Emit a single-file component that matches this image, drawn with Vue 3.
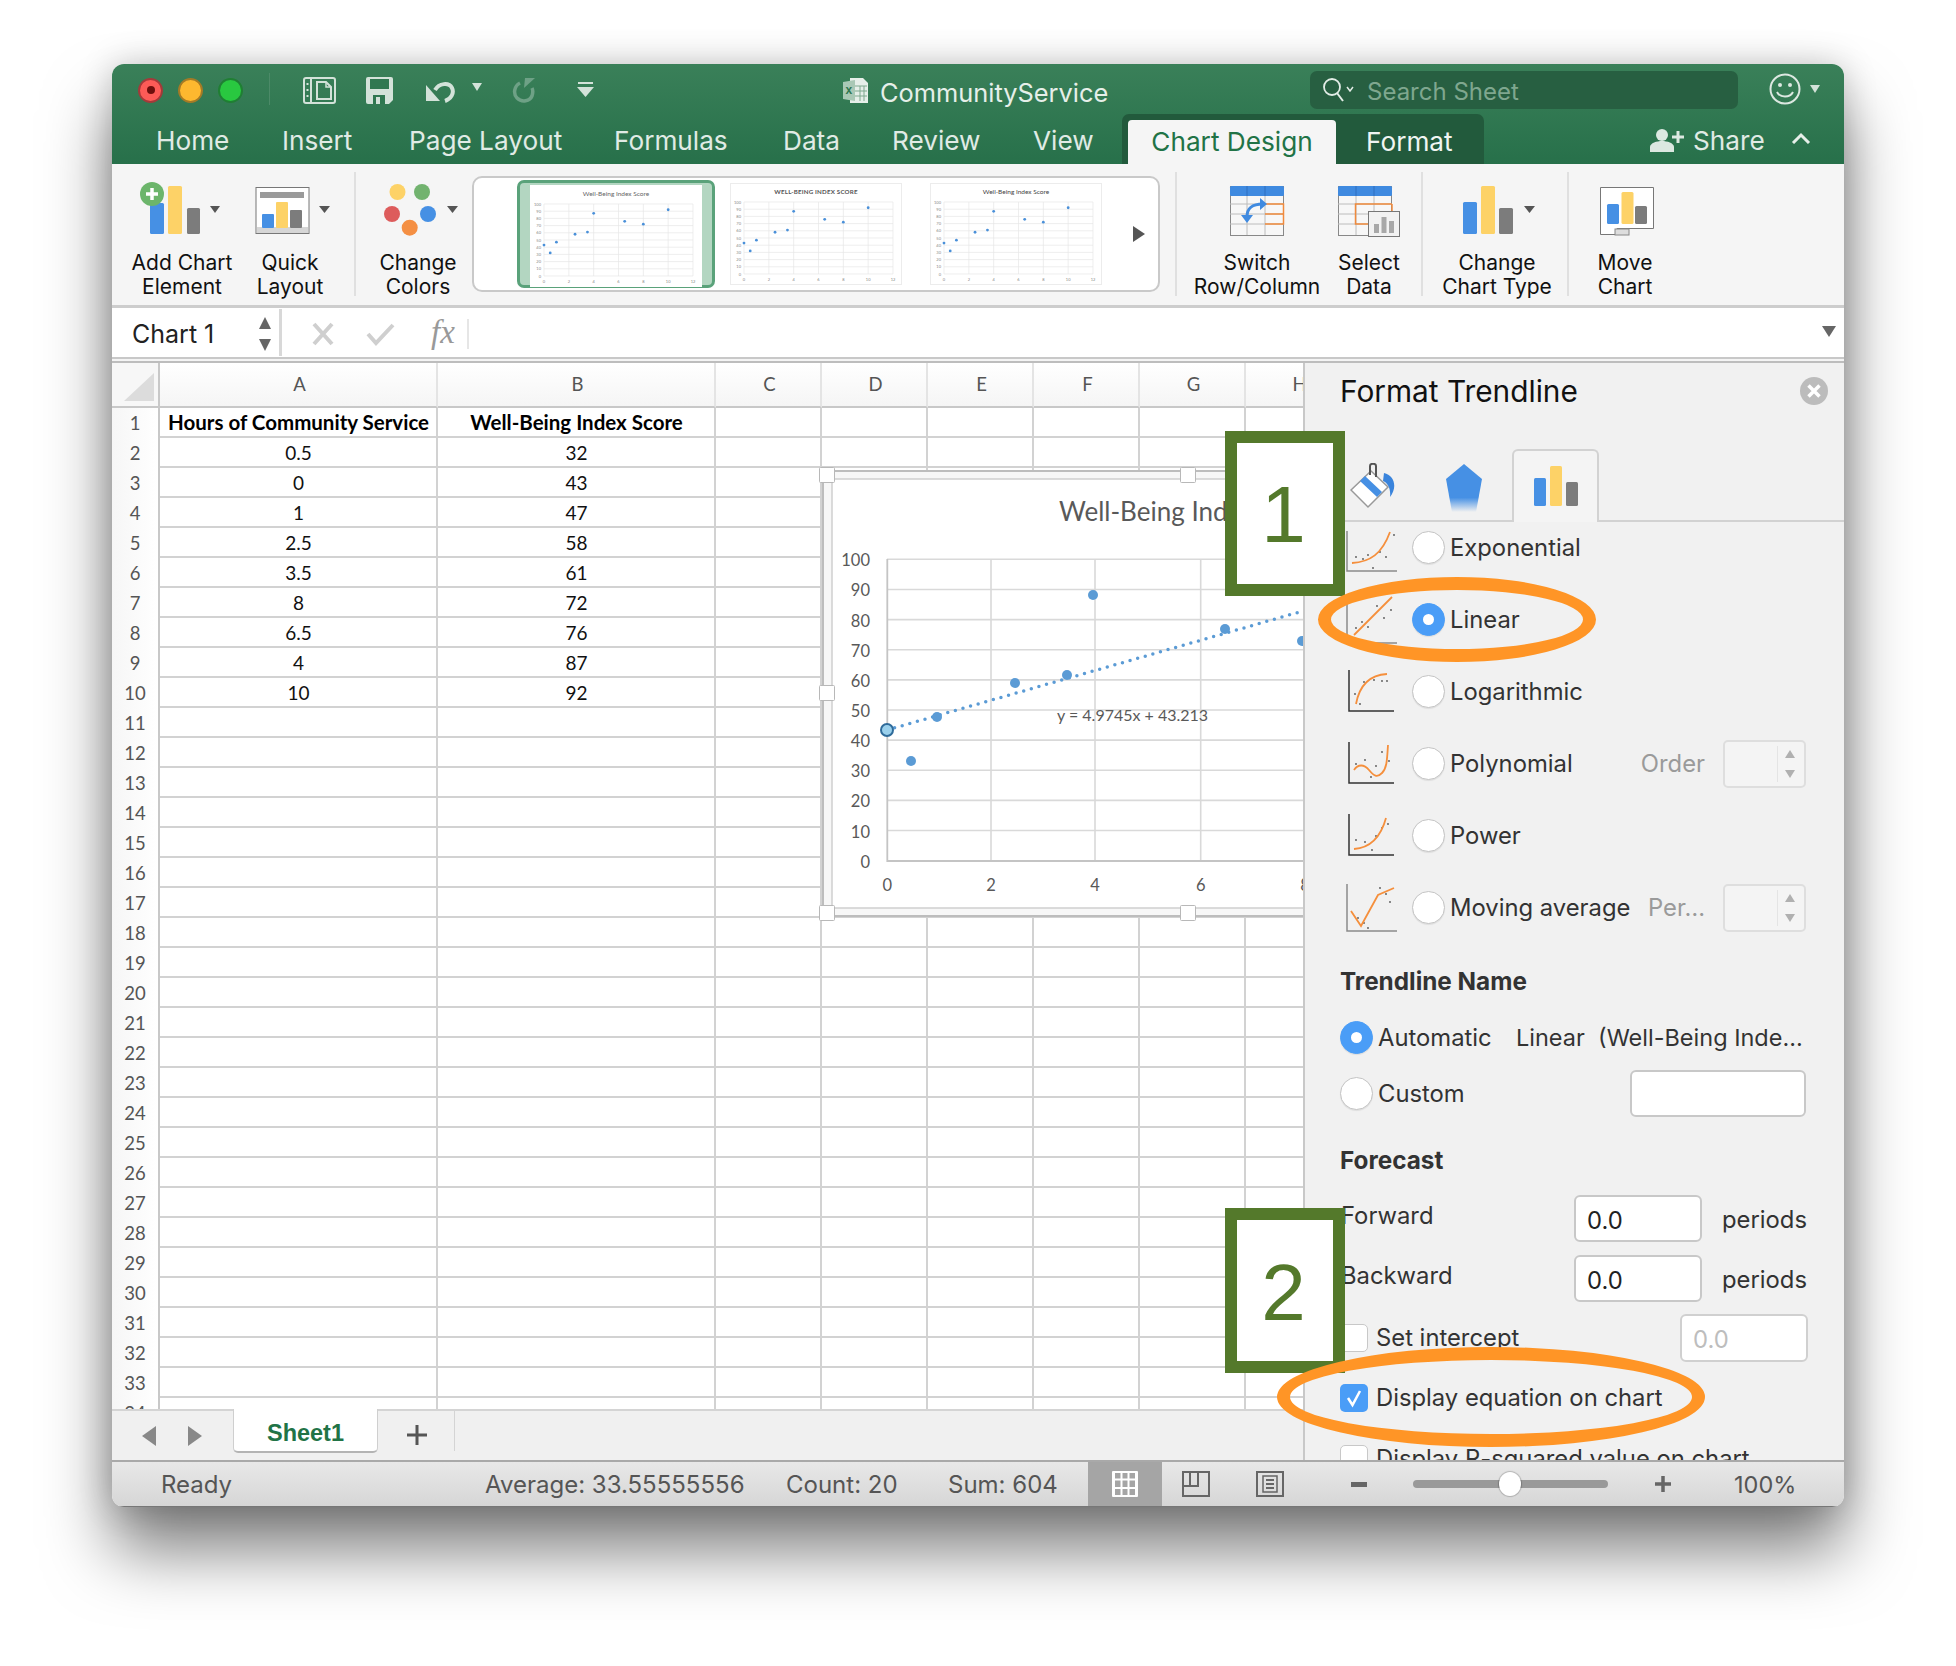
<script setup>
const tabs = [
  { t: 'Home', w: 126 }, { t: 'Insert', w: 127 }, { t: 'Page Layout', w: 205 }, { t: 'Formulas', w: 169 },
  { t: 'Data', w: 109 }, { t: 'Review', w: 141 }, { t: 'View', w: 89 }
]
const cols = [
  { l: 'A', w: 278 }, { l: 'B', w: 278 }, { l: 'C', w: 106 }, { l: 'D', w: 106 },
  { l: 'E', w: 106 }, { l: 'F', w: 106 }, { l: 'G', w: 106 }, { l: 'H', w: 106 }
]
const cells = [
  ['Hours of Community Service', 'Well-Being Index Score'], ['0.5', '32'], ['0', '43'], ['1', '47'], ['2.5', '58'],
  ['3.5', '61'], ['8', '72'], ['6.5', '76'], ['4', '87'], ['10', '92']
]
const rows = Array.from({ length: 34 }, (_, i) => ({ n: i + 1, v: cells[i] || ['', ''] }))
const pts = [[0.5, 32], [0, 43], [1, 47], [2.5, 58], [3.5, 61], [8, 72], [6.5, 76], [4, 87], [10, 92]]
const thumbs = [
  { title: 'Well-Being Index Score', cls: 'th-title', sel: true },
  { title: 'WELL-BEING INDEX SCORE', cls: 'th-title caps', sel: false },
  { title: 'Well-Being Index Score', cls: 'th-title dark', sel: false }
]
const tx = (x) => 14 + (x * 149) / 12
const ty = (y) => 91 - y * 0.72
const yTicks = [0, 10, 20, 30, 40, 50, 60, 70, 80, 90, 100]
const xTicks = [0, 2, 4, 6, 8, 10, 12]

const chartYs = yTicks.map((v) => ({ v, y: 860.7 - v * 3.014 }))
const chartXs = [0, 2, 4, 6].map((v, i) => ({ v, x: [887.3, 991, 1095, 1200.7][i] }))
const chartDots = [[911, 761], [937, 717], [1015, 683], [1067, 675], [1093, 595], [1225, 629], [1302, 641]]
const handles = [[827, 475], [1188, 475], [827, 693], [827, 913], [1188, 913]]

const trend = [
  { name: 'Exponential', light: true, axis: 'M1 7V47H51', curve: 'M6 39C24 38 36 30 44 8', dots: [[10, 33], [17, 35], [22, 31], [27, 44], [34, 28], [40, 33], [48, 11]] },
  { name: 'Linear', on: true, light: true, axis: 'M1 1V47H51', curve: 'M8 39L46 1', dots: [[10, 32], [16, 26], [22, 31], [31, 10], [38, 22], [45, 14]] },
  { name: 'Logarithmic', axis: 'M3 2V43H48', curve: 'M10 36C13 20 22 7 41 6', dots: [[9, 26], [14, 36], [18, 14], [28, 12], [36, 13], [41, 13]] },
  { name: 'Polynomial', axis: 'M3 2V43H48', curve: 'M8 30C12 24 18 24 23 30S31 38 36 33 41 20 42 5', extra: 'Order', dots: [[10, 24], [19, 20], [25, 37], [30, 26], [36, 12], [43, 21]] },
  { name: 'Power', axis: 'M3 2V43H48', curve: 'M8 37C22 36 34 28 40 6', dots: [[10, 28], [19, 30], [26, 38], [30, 24], [36, 16], [42, 12]] },
  { name: 'Moving average', light: true, axis: 'M1 0V47H51', curve: 'M5 27L15 42 32 11 48 4', poly: true, extra: 'Per…', dots: [[12, 34], [18, 39], [22, 44], [34, 4], [40, 10], [44, 18]] }
]
</script>

<template>
  <div class="page">
    <div class="window">
      <header class="titlebar">
        <div class="toprow">
          <span class="light red"><i></i></span>
          <span class="light amber"></span>
          <span class="light green"></span>
          <span class="qdiv"></span>
          <svg class="q-doc" width="33" height="27" viewBox="0 0 33 27">
            <rect x="1" y="1" width="31" height="25" rx="2" fill="none" stroke="#d3e2d9" stroke-width="2" />
            <path d="M8 1V26" stroke="#d3e2d9" stroke-width="2" />
            <path d="M4.500 6V8M4.500 12V14M4.500 18V20" stroke="#d3e2d9" stroke-width="2" />
            <path d="M14 22V5H23L28 10V22Z" fill="none" stroke="#d3e2d9" stroke-width="2" />
            <path d="M23 5V10H28" fill="none" stroke="#d3e2d9" stroke-width="1.500" />
          </svg>
          <svg class="q-save" width="27" height="27" viewBox="0 0 27 27">
            <path d="M2 0H25A2 2 0 0 1 27 2V23L23 27H2A2 2 0 0 1 0 25V2A2 2 0 0 1 2 0Z" fill="#d3e2d9" />
            <rect x="4" y="2" width="19" height="10" fill="#2f7750" />
            <rect x="7" y="18" width="12" height="9" fill="#2f7750" />
            <rect x="10" y="20" width="4" height="7" fill="#d3e2d9" />
          </svg>
          <svg class="q-undo" width="31" height="23" viewBox="0 0 31 23">
            <path d="M1 5V21H15Z" fill="#d3e2d9" />
            <path d="M10 10C14 3 24 2 27 8C29.500 13 26 19 20 21" fill="none" stroke="#d3e2d9" stroke-width="4" />
          </svg>
          <span class="caret qc1"></span>
          <svg class="q-redo" width="24" height="25" viewBox="0 0 24 25">
            <path d="M8 5C2 8 1 16 5 20C10 25 18 23 20 18C21 15 21 12 20 10" fill="none" stroke="#6ea186" stroke-width="3.500" />
            <path d="M13 0L23 0L12 10Z" fill="#6ea186" />
          </svg>
          <svg class="q-custom" width="17" height="15" viewBox="0 0 17 15">
            <rect x="1" y="0" width="15" height="2" fill="#d3e2d9" />
            <path d="M0 5H17L8.500 15Z" fill="#d3e2d9" />
          </svg>
          <svg class="q-file" width="26" height="27" viewBox="0 0 26 27">
            <path d="M7 1H20L25 6V26H7Z" fill="#e6efe9" />
            <path d="M12 9H24M12 14H24M12 19H24M17 9V24M21 9V24" stroke="#7fa98f" stroke-width="1" />
            <path d="M0 5L12 3V24L0 22Z" fill="#a9c8b5" />
            <text x="2.500" y="17" class="q-x">x</text>
          </svg>
          <span class="doc-title">CommunityService</span>
          <div class="search">
            <svg width="32" height="28" viewBox="0 0 32 28">
              <circle cx="10" cy="11" r="8" fill="none" stroke="#e2ece6" stroke-width="1.800" />
              <path d="M15 17L21 25" stroke="#e2ece6" stroke-width="2" />
              <path d="M25 11L28 15L31 11" fill="none" stroke="#e2ece6" stroke-width="1.500" />
            </svg>
            <span class="s-text">Search Sheet</span>
          </div>
          <svg class="smiley" width="32" height="32" viewBox="0 0 32 32">
            <circle cx="16" cy="16" r="14.500" fill="none" stroke="#dce8e1" stroke-width="2" />
            <circle cx="11" cy="12" r="2" fill="#dce8e1" /><circle cx="21" cy="12" r="2" fill="#dce8e1" />
            <path d="M8 19C11 25 21 25 24 19" fill="none" stroke="#dce8e1" stroke-width="2" />
          </svg>
          <span class="caret qc2"></span>
        </div>
        <div class="tabrow">
          <span v-for="t in tabs" :key="t.t" class="tab" :style="{ width: t.w + 'px' }">{{ t.t }}</span>
          <div class="ctx">
            <span class="ctx-on">Chart Design</span>
            <span class="ctx-off">Format</span>
          </div>
          <svg class="share-ico" width="35" height="24" viewBox="0 0 35 24">
            <circle cx="12" cy="7" r="6" fill="#dce8e1" />
            <path d="M0 24V19C0 15 7 13 12 13S24 15 24 19V24Z" fill="#dce8e1" />
            <path d="M28 3V15M22 9H34" stroke="#dce8e1" stroke-width="3" />
          </svg>
          <span class="share">Share</span>
          <svg class="chev" width="20" height="12" viewBox="0 0 20 12"><path d="M2 11L10 3L18 11" fill="none" stroke="#e6efe9" stroke-width="3" /></svg>
        </div>
      </header>

      <section class="ribbon">
        <div class="rb w116">
          <svg width="116" height="56" viewBox="0 0 116 56">
            <rect x="26" y="23" width="14" height="31" rx="1.500" fill="#4690e4" />
            <rect x="44" y="6" width="14" height="48" rx="1.500" fill="#fdd267" />
            <rect x="63" y="28" width="13" height="26" rx="1.500" fill="#7c7c7c" />
            <circle cx="28" cy="14" r="12" fill="#6cb56b" />
            <path d="M28 8V20M22 14H34" stroke="#fff" stroke-width="3.500" />
            <path d="M86 26H96L91 33Z" fill="#555" />
          </svg>
          <span class="lbl">Add Chart<br />Element</span>
        </div>
        <div class="rb w100">
          <svg width="100" height="56" viewBox="0 0 100 56">
            <rect x="16" y="7.500" width="53" height="46" fill="#fff" stroke="#777" />
            <rect x="20" y="12" width="44" height="6" fill="#9a9a9a" />
            <rect x="17" y="47" width="51" height="6" fill="#d6d6d6" />
            <rect x="22" y="34" width="12" height="14" rx="1" fill="#4690e4" />
            <rect x="36" y="22" width="12" height="26" rx="1" fill="#fdd267" />
            <rect x="50" y="30" width="12" height="18" rx="1" fill="#7c7c7c" />
            <path d="M79 26H90L84.500 33Z" fill="#555" />
          </svg>
          <span class="lbl">Quick<br />Layout</span>
        </div>
        <span class="rsep first"></span>
        <div class="rb w108">
          <svg width="108" height="56" viewBox="0 0 108 56">
            <circle cx="33.500" cy="12" r="8" fill="#fdd267" />
            <circle cx="58" cy="12" r="8" fill="#72b36f" />
            <circle cx="28" cy="34" r="8" fill="#dd5c5c" />
            <circle cx="64" cy="34" r="8" fill="#4690e4" />
            <circle cx="45.700" cy="47.700" r="8" fill="#f48f43" />
            <path d="M83 26H94L88.500 33Z" fill="#555" />
          </svg>
          <span class="lbl">Change<br />Colors</span>
        </div>
        <div class="gallery">
          <div v-for="(th, i) in thumbs" :key="i" class="thumb" :class="{ sel: th.sel, third: i === 2 }">
            <svg width="172" height="102" viewBox="0 0 172 102" class="thsvg">
              <text x="86" y="11" text-anchor="middle" :class="th.cls">{{ th.title }}</text>
              <path v-for="v in yTicks" :key="'g' + v" :d="`M14 ${ty(v)}H163`" class="th-grid" />
              <path v-for="v in xTicks" :key="'v' + v" :d="`M${tx(v)} 19V91`" class="th-grid" />
              <text v-for="v in yTicks" :key="'yt' + v" x="11" :y="ty(v) + 1.500" text-anchor="end" class="th-tick">{{ v }}</text>
              <text v-for="v in xTicks" :key="'xt' + v" :x="tx(v)" y="98" text-anchor="middle" class="th-tick">{{ v }}</text>
              <circle v-for="(p, k) in pts" :key="'p' + k" :cx="tx(p[0])" :cy="ty(p[1])" r="1.400" fill="#4a90d9" />
            </svg>
          </div>
          <svg class="gal-arrow" width="12" height="16" viewBox="0 0 12 16"><path d="M0 0L12 8L0 16Z" fill="#555" /></svg>
        </div>
        <span class="rsep gal"></span>
        <div class="rb w120">
          <svg width="120" height="56" viewBox="0 0 120 56">
            <rect x="33.500" y="6.500" width="53" height="49" fill="#f7f7f7" stroke="#888" />
            <path d="M33 24H87M33 34H87M33 44H87M50 6V55M68 6V55" stroke="#bcbcbc" />
            <rect x="33" y="6" width="54" height="10" rx="1.500" fill="#3f8ae0" />
            <path d="M50 16V6M68 16V6" stroke="#2e6fc0" />
            <path d="M68 24H86.500V44H68M68 34H86.500" fill="none" stroke="#f08a3c" stroke-width="1.500" />
            <path d="M66 24C55 24 50 28 50 37" fill="none" stroke="#3f8ae0" stroke-width="3" />
            <path d="M63 18L70 24L63 30ZM44 35H56L50 43Z" fill="#3f8ae0" />
          </svg>
          <span class="lbl">Switch<br />Row/Column</span>
        </div>
        <div class="rb w104">
          <svg width="104" height="56" viewBox="0 0 104 56" class="ovis">
            <rect x="21.500" y="6.500" width="53" height="49" fill="#f7f7f7" stroke="#888" />
            <path d="M21 24H75M21 34H75M21 44H75M39 6V55M57 6V55" stroke="#bcbcbc" />
            <rect x="21" y="6" width="54" height="10" rx="1.500" fill="#3f8ae0" />
            <path d="M39 16V6M57 16V6" stroke="#2e6fc0" />
            <path d="M75 24H38.500V44H60" fill="none" stroke="#f08a3c" stroke-width="1.500" />
            <path d="M75 24V34" fill="none" stroke="#f08a3c" stroke-width="1.500" />
            <rect x="51.500" y="31.500" width="31" height="25" fill="#f2f2f2" stroke="#777" />
            <rect x="57" y="44" width="5" height="9" fill="#a8a8a8" /><rect x="64.500" y="37" width="5" height="16" fill="#a8a8a8" /><rect x="72" y="41" width="5" height="12" fill="#a8a8a8" />
          </svg>
          <span class="lbl">Select<br />Data</span>
        </div>
        <span class="rsep mid"></span>
        <div class="rb w140">
          <svg width="140" height="56" viewBox="0 0 140 56">
            <rect x="36" y="22" width="14" height="32" rx="1.500" fill="#4690e4" />
            <rect x="54" y="6" width="14" height="48" rx="1.500" fill="#fdd267" />
            <rect x="72" y="28" width="14" height="26" rx="1.500" fill="#7c7c7c" />
            <path d="M97 26H108L102.500 33Z" fill="#555" />
          </svg>
          <span class="lbl">Change<br />Chart Type</span>
        </div>
        <span class="rsep"></span>
        <div class="rb w92">
          <svg width="92" height="56" viewBox="0 0 92 56">
            <path d="M21.500 7.500H74.500V48.500H21.500V48.500" fill="#fff" stroke="#777" />
            <path d="M21.500 7.500V54.500H38V48.500" fill="#fff" stroke="#777" />
            <rect x="36" y="49" width="14" height="6" fill="#ddd" stroke="#888" />
            <rect x="28" y="24" width="12" height="20" rx="1.500" fill="#4690e4" />
            <rect x="42.500" y="12" width="12" height="32" rx="1.500" fill="#fdd267" />
            <rect x="56" y="26" width="12" height="18" rx="1.500" fill="#7c7c7c" />
          </svg>
          <span class="lbl">Move<br />Chart</span>
        </div>
      </section>

      <section class="formula">
        <div class="namebox">
          <span class="nm">Chart 1</span>
          <span class="updown"><i class="up"></i><i class="down"></i></span>
        </div>
        <svg class="fx-x" width="22" height="24" viewBox="0 0 22 24"><path d="M2 2L20 22M20 2L2 22" stroke="#cfcfcf" stroke-width="4" /></svg>
        <svg class="fx-c" width="30" height="24" viewBox="0 0 30 24"><path d="M2 12L10 21L27 3" fill="none" stroke="#cfcfcf" stroke-width="4" /></svg>
        <span class="fx">fx</span>
        <span class="fdiv"></span>
        <span class="fcaret"></span>
      </section>

      <div class="main">
        <div class="left">
          <div class="sheet">
            <div class="hrow">
              <div class="corner"><i></i></div>
              <div v-for="c in cols" :key="c.l" class="hcell" :style="{ width: c.w + 'px' }">{{ c.l }}</div>
            </div>
            <div v-for="r in rows" :key="r.n" class="row">
              <div class="rnum">{{ r.n }}</div>
              <div class="cell" :class="{ bold: r.n === 1 }" :style="{ width: cols[0].w + 'px' }">{{ r.v[0] }}</div>
              <div class="cell" :class="{ bold: r.n === 1 }" :style="{ width: cols[1].w + 'px' }">{{ r.v[1] }}</div>
              <div v-for="c in cols.slice(2)" :key="c.l" class="cell" :style="{ width: c.w + 'px' }"></div>
            </div>
            <svg class="chart" width="488" height="460" viewBox="815 465 488 460">
              <rect x="823" y="471" width="500" height="445" fill="#f7f7f7" stroke="#bdbdbd" stroke-width="2" />
              <rect x="832" y="479" width="500" height="429" fill="#fff" stroke="#cfcfcf" stroke-width="1.500" />
              <path v-for="y in chartYs" :key="y.v" :d="`M887 ${y.y}H1303`" class="cg" />
              <path v-for="x in chartXs.slice(1)" :key="x.v" :d="`M${x.x} 559V861`" class="cg" />
              <path d="M887.300 559V861H1303" fill="none" stroke="#c4c4c4" stroke-width="1.800" />
              <text x="1059" y="521" class="ctitle">Well-Being Index Score</text>
              <text v-for="y in chartYs" :key="'l' + y.v" x="870" :y="y.y + 7" text-anchor="end" class="ctick">{{ y.v }}</text>
              <text v-for="x in chartXs" :key="'t' + x.v" :x="x.x" y="891" text-anchor="middle" class="ctick">{{ x.v }}</text>
              <text x="1305" y="891" text-anchor="middle" class="ctick">8</text>
              <text x="1057" y="721" class="ceq">y = 4.9745x + 43.213</text>
              <path d="M887 730L1303 611" fill="none" stroke="#5b9bd5" stroke-width="3.500" stroke-linecap="round" stroke-dasharray="0 7.900" />
              <circle v-for="(d, i) in chartDots" :key="i" :cx="d[0]" :cy="d[1]" r="5" fill="#5b9bd5" />
              <circle cx="887" cy="730" r="6" fill="#9ad0ec" stroke="#2f6b9a" stroke-width="2" />
              <rect v-for="(h, i) in handles" :key="'h' + i" :x="h[0] - 7.500" :y="h[1] - 7.500" width="15" height="15" rx="1" fill="#fff" stroke="#b8b8b8" />
            </svg>
          </div>
          <div class="sheettabs">
            <span class="arr l"></span>
            <span class="arr r"></span>
            <span class="sheettab">Sheet1</span>
            <svg class="plus" width="20" height="20" viewBox="0 0 20 20"><path d="M10 0V20M0 10H20" stroke="#555" stroke-width="3" /></svg>
            <span class="tdiv"></span>
          </div>
        </div>

        <aside class="panel">
          <div class="ph">
            <span class="ptitle">Format Trendline</span>
            <svg width="28" height="28" viewBox="0 0 28 28">
              <circle cx="14" cy="14" r="14" fill="#bcbcbc" />
              <path d="M8.500 8.500L19.500 19.500M19.500 8.500L8.500 19.500" stroke="#fff" stroke-width="3.500" />
            </svg>
          </div>
          <div class="ptabs">
            <svg class="p-paint" width="46" height="46" viewBox="0 0 46 46">
              <path d="M1 27L21 8L38 24L18 44Z" fill="#fff" stroke="#999" stroke-width="1.500" />
              <path d="M10 18L15 13L32 29L27 34Z" fill="#4690e4" />
              <path d="M20 12V3C20 0 26 0 26 3V14" fill="none" stroke="#555" stroke-width="2" />
              <path d="M34 10C44 12 48 24 40 34C41 26 38 20 33 18Z" fill="#3a84dc" />
            </svg>
            <svg class="p-pent" width="36" height="48" viewBox="0 0 36 48">
              <defs><linearGradient id="pf" x1="0" y1="0" x2="0" y2="1"><stop offset="0.700" stop-color="#4690e4" /><stop offset="1" stop-color="#4690e4" stop-opacity="0" /></linearGradient></defs>
              <path d="M18 0L36 15L30 48H6L0 15Z" fill="url(#pf)" />
            </svg>
            <div class="ptab-on">
              <svg width="44" height="40" viewBox="0 0 44 40">
                <rect x="0" y="12" width="12" height="28" rx="1.500" fill="#4690e4" />
                <rect x="16" y="0" width="12" height="40" rx="1.500" fill="#fdd267" />
                <rect x="32" y="16" width="12" height="24" rx="1.500" fill="#7c7c7c" />
              </svg>
            </div>
          </div>
          <div class="pbody">
            <div v-for="o in trend" :key="o.name" class="opt">
              <svg class="mini" width="52" height="48" viewBox="0 0 52 48">
                <path :d="o.axis" fill="none" :stroke="o.light ? '#8a8a8a' : '#333'" stroke-width="1.500" />
                <circle v-for="(d, i) in o.dots" :key="i" :cx="d[0]" :cy="d[1]" r="0.900" fill="#555" />
                <path :d="o.curve" fill="none" stroke="#f58f3c" stroke-width="1.800" />
              </svg>
              <span class="radio" :class="{ on: o.on }"></span>
              <span class="optlabel">{{ o.name }}</span>
              <template v-if="o.extra">
                <span class="extra">{{ o.extra }}</span>
                <div class="stepper"><i class="sp"></i><span class="ar"><b class="u"></b><b class="d"></b></span></div>
              </template>
            </div>

            <div class="sec first">Trendline Name</div>
            <div class="frow auto">
              <span class="radio on"></span>
              <span class="rl">Automatic</span>
              <span class="autoname">Linear&nbsp;&nbsp;(Well-Being Inde...</span>
            </div>
            <div class="frow cust">
              <span class="radio"></span>
              <span class="rl">Custom</span>
              <span class="inp wide"></span>
            </div>
            <div class="sec fc">Forecast</div>
            <div class="frow fw">
              <span class="fl">Forward</span>
              <span class="inp num">0.0</span>
              <span class="per">periods</span>
            </div>
            <div class="frow bw">
              <span class="fl">Backward</span>
              <span class="inp num">0.0</span>
              <span class="per">periods</span>
            </div>
            <div class="frow si">
              <span class="cb"></span>
              <span class="cl">Set intercept</span>
              <span class="inp num dis">0.0</span>
            </div>
            <div class="frow de">
              <span class="cb on">
                <svg width="28" height="28" viewBox="0 0 28 28"><path d="M8 14L12.500 21L20 7" fill="none" stroke="#fff" stroke-width="2.500" /></svg>
              </span>
              <span class="cl">Display equation on chart</span>
            </div>
            <div class="frow rs">
              <span class="cb"></span>
              <span class="cl">Display R-squared value on chart</span>
            </div>
          </div>
        </aside>
      </div>

      <footer class="status">
        <span class="ready">Ready</span>
        <span class="avg">Average: 33.55555556</span>
        <span class="cnt">Count: 20</span>
        <span class="sum">Sum: 604</span>
        <div class="view-on">
          <svg width="26" height="26" viewBox="0 0 26 26">
            <rect width="26" height="26" rx="1" fill="#fff" />
            <path d="M3 2H23V24H3Z" fill="#a5a5a5" />
            <path d="M9.500 0V26M16.500 0V26M0 8.500H26M0 17H26" stroke="#fff" stroke-width="2" />
          </svg>
        </div>
        <svg class="v2" width="28" height="26" viewBox="0 0 28 26">
          <rect x="1" y="1" width="26" height="24" fill="none" stroke="#666" stroke-width="2" />
          <path d="M1 15H16V1M8 1V15" fill="none" stroke="#666" stroke-width="2" />
        </svg>
        <svg class="v3" width="28" height="26" viewBox="0 0 28 26">
          <rect x="1" y="1" width="26" height="24" fill="none" stroke="#666" stroke-width="2" />
          <rect x="7" y="5" width="14" height="16" fill="none" stroke="#666" stroke-width="1.500" />
          <path d="M10 9H18M10 13H18M10 17H18" stroke="#666" stroke-width="2" />
        </svg>
        <span class="zminus"></span>
        <div class="slider"><i></i></div>
        <svg class="zplus" width="16" height="16" viewBox="0 0 16 16"><path d="M8 0V16M0 8H16" stroke="#666" stroke-width="3.500" /></svg>
        <span class="zoomv">100%</span>
      </footer>
    </div>

    <div class="anno-box b1">1</div>
    <div class="anno-box b2">2</div>
    <div class="ring r1"></div>
    <div class="ring r2"></div>
  </div>
</template>

<style scoped>
.page {
  position: relative;
  width: 1956px;
  height: 1666px;
  box-sizing: border-box;
  padding: 64px 0 0 112px;
  background: #fff;
  overflow: hidden;
  font-family: Inter, "Liberation Sans", sans-serif;
}
.window {
  position: relative;
  width: 1732px;
  height: 1443px;
  display: flex;
  flex-direction: column;
  border-radius: 12px;
  overflow: hidden;
  box-shadow: 0 44px 66px rgba(0, 0, 0, 0.5), 0 0 34px rgba(0, 0, 0, 0.2);
}

/* title bar */
.titlebar {
  height: 100px;
  flex: none;
  background: linear-gradient(#3a8059, #27704a);
}
.toprow {
  height: 50px;
  display: flex;
  align-items: center;
}
.light {
  width: 25px;
  height: 25px;
  box-sizing: border-box;
  border-radius: 50%;
  margin-left: 15px;
  margin-top: 2px;
  display: flex;
  align-items: center;
  justify-content: center;
  flex: none;
}
.light.red { margin-left: 26px; background: #fc5b57; border: 2px solid #a33a3a; }
.light.red i { width: 8px; height: 8px; border-radius: 50%; background: #6e0f0d; }
.light.amber { background: #fdb82f; border: 2px solid #a47a26; }
.light.green { background: #29c840; border: 2px solid #1f7f33; }
.qdiv { width: 1px; height: 32px; background: #4c8a68; margin-left: 26px; flex: none; }
.q-doc { margin-left: 33px; flex: none; margin-top: 2px; }
.q-save { margin-left: 30px; flex: none; margin-top: 2px; }
.q-undo { margin-left: 32px; flex: none; margin-top: 4px; }
.caret { width: 0; height: 0; border-left: 5.5px solid transparent; border-right: 5.5px solid transparent; border-top: 8px solid #d3e2d9; flex: none; }
.qc1 { margin-left: 16px; margin-top: -4px; }
.q-redo { margin-left: 30px; flex: none; margin-top: 2px; }
.q-custom { margin-left: 41px; flex: none; }
.q-file { margin-left: 249px; flex: none; margin-top: 2px; }
.q-x { font-size: 12px; fill: #2f7750; font-family: "Liberation Sans", sans-serif; font-weight: 700; }
.doc-title {
  margin-left: 11px;
  width: 228px;
  flex: none;
  font-size: 25.400px;
  color: #e6efe9;
  white-space: nowrap;
  margin-top: 6px;
}
.search {
  margin-left: 202px;
  width: 428px;
  height: 38px;
  flex: none;
  box-sizing: border-box;
  background: #275f41;
  border-radius: 7px;
  display: flex;
  align-items: center;
  padding-left: 12px;
  margin-top: 2px;
  font-size: 24px;
  color: #7fa78f;
  gap: 13px;
}
.s-text { margin-top: 2px; }
.smiley { margin-left: 31px; flex: none; margin-top: 0; }
.qc2 { margin-left: 9px; margin-top: 0; }

.tabrow {
  height: 50px;
  display: flex;
  align-items: flex-end;
  padding-left: 44px;
  font-size: 26.200px;
  color: #e0ebe5;
}
.tab { height: 50px; line-height: 54px; flex: none; white-space: nowrap; }
.ctx {
  width: 362px;
  height: 50px;
  flex: none;
  box-sizing: border-box;
  background: #225a3c;
  border-radius: 7px 7px 0 0;
  display: flex;
  align-items: flex-end;
  padding-left: 6px;
}
.ctx-on {
  width: 208px;
  height: 44px;
  line-height: 43px;
  background: #f5f5f5;
  border-radius: 4px 4px 0 0;
  color: #217346;
  text-align: center;
  flex: none;
}
.ctx-off { margin-left: 30px; height: 44px; line-height: 43px; color: #f0f5f2; }
.share-ico { margin-left: 166px; flex: none; margin-bottom: 12px; }
.share { margin-left: 8px; height: 50px; line-height: 54px; flex: none; width: 98px; }
.chev { flex: none; margin-bottom: 20px; }

/* ribbon */
.ribbon {
  height: 141px;
  flex: none;
  box-sizing: border-box;
  background: #f5f5f5;
  display: flex;
  padding-left: 12px;
  border-bottom: 0;
}
.rb {
  flex: none;
  display: flex;
  flex-direction: column;
  align-items: center;
  padding-top: 16px;
}
.rb svg { display: block; flex: none; }
.rb svg.ovis { overflow: visible; }
.lbl {
  margin-top: 15px;
  font-size: 21px;
  line-height: 24px;
  color: #111;
  text-align: center;
  white-space: nowrap;
}
.w116 { width: 116px; }
.w100 { width: 100px; }
.w108 { width: 108px; margin-left: 8px; }
.w120 { width: 120px; margin-left: 20px; }
.w104 { width: 104px; }
.w140 { width: 140px; margin-left: 4px; }
.w92 { width: 92px; margin-left: 10px; }
.rsep {
  width: 2px;
  height: 124px;
  margin-top: 8px;
  background: #e0e0e0;
  flex: none;
}
.rsep.first { margin-left: 14px; }
.rsep.gal { margin-left: 15px; }
.gallery {
  width: 688px;
  height: 116px;
  margin-top: 12px;
  flex: none;
  box-sizing: border-box;
  background: #fff;
  border: 2px solid #c9c9c9;
  border-radius: 10px;
  display: flex;
  align-items: center;
  padding-left: 43px;
}
.thumb {
  width: 172px;
  height: 102px;
  flex: none;
  margin-right: 28px;
  box-shadow: inset 0 0 0 1px #ececec;
}
.thsvg { display: block; }
.thumb.sel {
  width: 198px;
  height: 108px;
  box-sizing: border-box;
  background: #b3d6c1;
  border: 3px solid #5aa27a;
  border-radius: 7px;
  padding: 2px 10px;
  margin-right: 15px;
  box-shadow: none;
}
.thumb.sel .thsvg { background: #fff; }
.th-title { font-size: 6.500px; fill: #666; font-family: Lato, sans-serif; }
.th-title.caps { font-weight: 700; font-size: 6.200px; letter-spacing: 0.2px; fill: #555; }
.th-title.dark { fill: #444; }
.th-grid { stroke: #e6e6e6; stroke-width: 0.700; fill: none; }
.th-tick { font-size: 4px; fill: #888; font-family: Lato, sans-serif; }
.gal-arrow { flex: none; margin-top: 0; margin-left: 3px; }

/* formula bar */
.formula {
  height: 58px;
  flex: none;
  box-sizing: border-box;
  background: #fff;
  border-top: 3px solid #cdcdcd;
  border-bottom: 2px solid #bdbdbd;
  display: flex;
  align-items: center;
  position: relative;
  box-shadow: inset 0 -2px 0 #f4f4f4, inset 0 -4px 0 #c8c8c8;
}
.namebox {
  width: 170px;
  height: 47px;
  flex: none;
  box-sizing: border-box;
  display: flex;
  align-items: center;
  padding-left: 20px;
  border-right: 3px solid #d8d8d8;
  margin-top: -4px;
}
.nm { font-size: 25px; color: #222; white-space: nowrap; width: 127px; flex: none; position: relative; top: 1px; }
.updown { display: flex; flex-direction: column; gap: 10px; position: relative; top: 1px; }
.updown i { width: 0; height: 0; border-left: 6px solid transparent; border-right: 6px solid transparent; display: block; }
.updown .up { border-bottom: 12px solid #666; }
.updown .down { border-top: 12px solid #666; }
.fx-x { margin-left: 30px; flex: none; margin-top: -2px; }
.fx-c { margin-left: 32px; flex: none; margin-top: -2px; }
.fx {
  margin-left: 35px;
  font-family: "Liberation Serif", serif;
  font-style: italic;
  font-size: 33px;
  color: #999;
  width: 30px;
  flex: none;
  margin-top: -4px;
}
.fdiv { width: 2px; height: 30px; background: #e6e6e6; margin-left: 6px; flex: none; margin-top: -2px; }
.fcaret {
  margin-left: auto;
  margin-right: 8px;
  width: 0;
  height: 0;
  border-left: 7px solid transparent;
  border-right: 7px solid transparent;
  border-top: 11px solid #666;
  margin-top: -6px;
}

/* main */
.main { height: 1097px; flex: none; display: flex; }
.left { width: 1191px; flex: none; display: flex; flex-direction: column; }
.sheet {
  position: relative;
  height: 1046px;
  flex: none;
  overflow: hidden;
  background: #fff;
  font-family: Lato, sans-serif;
}
.hrow { display: flex; height: 45px; width: 1400px; }
.corner {
  width: 48px;
  flex: none;
  box-sizing: border-box;
  border-right: 2px solid #c8c8c8;
  border-bottom: 2px solid #c8c8c8;
  position: relative;
  background: #f7f7f7;
  padding: 10px 4px 5px 12px;
}
.corner i {
  display: block;
  width: 30px;
  height: 28px;
  background: #dcdcdc;
  clip-path: polygon(100% 0, 100% 100%, 0 100%);
}
.hcell {
  flex: none;
  box-sizing: border-box;
  border-right: 2px solid #e4e4e4;
  border-bottom: 2px solid #c8c8c8;
  background: linear-gradient(#fff, #f5f5f5);
  text-align: center;
  line-height: 43px;
  font-size: 18.500px;
  color: #555;
  padding-left: 3px;
}
.row { display: flex; height: 30px; width: 1400px; }
.rnum {
  width: 48px;
  flex: none;
  box-sizing: border-box;
  border-right: 2px solid #c8c8c8;
  background: linear-gradient(90deg, #f6f6f6, #fff);
  text-align: center;
  line-height: 30px;
  font-size: 18.500px;
  color: #555;
}
.cell {
  flex: none;
  box-sizing: border-box;
  border-right: 2px solid #d2d2d2;
  border-bottom: 2px solid #d2d2d2;
  text-align: center;
  line-height: 29px;
  font-size: 19px;
  color: #111;
  white-space: nowrap;
  overflow: hidden;
  padding-left: 1px;
}
.cell.bold { font-weight: 700; color: #000; font-size: 20.500px; }
.chart { position: absolute; left: 703px; top: 102px; display: block; }
.cg { stroke: #d9d9d9; stroke-width: 1.600; fill: none; }
.ctitle { font-size: 26px; fill: #595959; font-family: Lato, sans-serif; }
.ctick { font-size: 16.500px; fill: #595959; font-family: Lato, sans-serif; }
.ceq { font-size: 16px; fill: #595959; font-family: Lato, sans-serif; }

.sheettabs {
  height: 51px;
  flex: none;
  box-sizing: border-box;
  background: #f0f0f0;
  border-top: 2px solid #d4d4d4;
  display: flex;
  align-items: flex-start;
  padding-left: 30px;
}
.arr { width: 0; height: 0; border-top: 10px solid transparent; border-bottom: 10px solid transparent; margin-top: 15px; flex: none; }
.arr.l { border-right: 14px solid #888; }
.arr.r { border-left: 14px solid #888; margin-left: 32px; }
.sheettab {
  width: 145px;
  height: 44px;
  margin-left: 31px;
  margin-top: -2px;
  box-sizing: border-box;
  background: #fff;
  border: 1px solid #cfcfcf;
  border-top: 0;
  border-bottom: 2px solid #b4b4b4;
  border-radius: 0 0 5px 5px;
  color: #217346;
  font-size: 23.500px;
  text-align: center;
  line-height: 48px;
  flex: none;
  font-family: "Liberation Sans", sans-serif;
  font-weight: 700;
}
.plus { margin-left: 29px; margin-top: 14px; flex: none; }
.tdiv { width: 1px; height: 40px; background: #d4d4d4; margin-left: 27px; flex: none; }

/* panel */
.panel {
  width: 541px;
  flex: none;
  box-sizing: border-box;
  background: #f1f1f1;
  border-left: 2px solid #c8c8c8;
  display: flex;
  flex-direction: column;
  color: #333;
}
.ph {
  height: 86px;
  flex: none;
  box-sizing: border-box;
  display: flex;
  align-items: flex-start;
  justify-content: space-between;
  padding: 14px 16px 0 35px;
}
.ptitle { font-size: 29.800px; line-height: 28px; color: #111; white-space: nowrap; }
.ptabs {
  height: 73px;
  flex: none;
  box-sizing: border-box;
  border-bottom: 2px solid #d2d2d2;
  display: flex;
  align-items: flex-start;
}
.p-paint { margin-left: 45px; margin-top: 14px; flex: none; }
.p-pent { margin-left: 50px; margin-top: 15px; flex: none; }
.ptab-on {
  margin-left: 30px;
  width: 87px;
  height: 73px;
  flex: none;
  box-sizing: border-box;
  background: #f4f4f4;
  border: 2px solid #d2d2d2;
  border-bottom: 0;
  border-radius: 6px 6px 0 0;
  display: flex;
  justify-content: center;
  padding-top: 15px;
}
.ptab-on svg { display: block; }
.pbody { flex: 1; min-height: 0; overflow: hidden; font-size: 23.800px; padding-top: 0.5px; }
.opt {
  height: 50px;
  margin-bottom: 22px;
  padding: 0 38px 0 41px;
  display: flex;
  align-items: center;
}
.mini { flex: none; display: block; }
.radio {
  width: 33px;
  height: 33px;
  flex: none;
  box-sizing: border-box;
  border-radius: 50%;
  background: #fff;
  border: 1.500px solid #c4c4c4;
  box-shadow: 0 1px 1px rgba(0, 0, 0, 0.08);
  display: flex;
  align-items: center;
  justify-content: center;
}
.opt .radio { margin-left: 14px; }
.radio.on { background: #4a9df7; border-color: #4a9df7; }
.radio.on::after { content: ""; width: 11px; height: 11px; border-radius: 50%; background: #fff; }
.optlabel { margin-left: 5px; white-space: nowrap; flex: none; }
.extra { margin-left: auto; color: #9a9a9a; margin-right: 18px; white-space: nowrap; }
.stepper {
  width: 83px;
  height: 48px;
  flex: none;
  box-sizing: border-box;
  background: #f4f4f4;
  border: 2px solid #dedede;
  border-radius: 5px;
  display: flex;
  justify-content: flex-end;
  padding-right: 4px;
}
.sp { width: 1px; background: #e4e4e4; margin: 4px 2px 4px 0; display: block; }
.ar { width: 20px; display: flex; flex-direction: column; align-items: center; justify-content: center; gap: 12px; }
.ar b { width: 0; height: 0; border-left: 5.500px solid transparent; border-right: 5.500px solid transparent; display: block; }
.ar .u { border-bottom: 8px solid #b0b0b0; }
.ar .d { border-top: 8px solid #b0b0b0; }
.sec { padding-left: 35px; font-weight: 700; height: 30px; line-height: 30px; font-size: 24.300px; color: #333; }
.sec.first { margin-top: 33px; }
.sec.fc { margin-top: 28px; }
.frow { display: flex; align-items: center; padding: 0 38px 0 35px; white-space: nowrap; }
.auto { height: 34px; margin-top: 25px; }
.rl { margin-left: 5px; width: 138px; flex: none; }
.autoname { flex: none; font-size: 23.500px; }
.cust { height: 47px; margin-top: 15px; }
.inp {
  box-sizing: border-box;
  display: block;
  background: #fff;
  border: 2px solid #c8c8c8;
  border-radius: 6px;
  height: 47px;
  flex: none;
}
.inp.wide { width: 176px; margin-left: auto; }
.fw { height: 47px; margin-top: 20px; }
.bw { height: 47px; margin-top: 13px; }
.fl { width: 233px; flex: none; margin-bottom: 5px; padding-left: 1px; }
.inp.num { width: 128px; padding-left: 11px; line-height: 47px; color: #222; }
.per { margin-left: 20px; margin-top: 3px; flex: none; }
.si { height: 48px; margin-top: 12px; padding-right: 36px; }
.inp.dis { margin-left: auto; height: 48px; color: #bdbdbd; border-color: #d0d0d0; }
.cb {
  width: 28px;
  height: 28px;
  flex: none;
  box-sizing: border-box;
  border-radius: 5px;
  background: #fff;
  border: 1.500px solid #c8c8c8;
  display: block;
}
.cb svg { display: block; }
.cb.on { background: #4a9df7; border: 0; }
.cl { margin-left: 8px; }
.de { height: 28px; margin-top: 22px; }
.rs { height: 28px; margin-top: 33px; align-items: flex-start; }
.rs .cl { margin-top: -1px; }

/* status */
.status {
  height: 47px;
  flex: none;
  box-sizing: border-box;
  background: linear-gradient(#e8e8e8, #d6d6d6);
  border-top: 2px solid #a9a9a9;
  border-bottom: 1px solid #777;
  display: flex;
  align-items: center;
  font-size: 24px;
  color: #555;
  white-space: nowrap;
}
.ready { margin-left: 49px; width: 324px; flex: none; }
.avg { width: 301px; flex: none; }
.cnt { width: 162px; flex: none; }
.sum { width: 140px; flex: none; }
.view-on {
  width: 74px;
  height: 44px;
  flex: none;
  background: #a5a5a5;
  display: flex;
  align-items: center;
  justify-content: center;
}
.view-on svg { display: block; }
.v2 { margin-left: 20px; flex: none; }
.v3 { margin-left: 46px; flex: none; }
.zminus { width: 16px; height: 5px; background: #666; margin-left: 67px; flex: none; }
.slider {
  position: relative;
  width: 195px;
  height: 8px;
  margin-left: 46px;
  border-radius: 4px;
  background: #999;
  flex: none;
}
.slider i {
  position: absolute;
  left: 86px;
  top: -8px;
  width: 22px;
  height: 24px;
  border-radius: 50%;
  background: #fff;
  box-shadow: 0 0 1px 1px rgba(0, 0, 0, 0.2);
}
.zplus { margin-left: 47px; flex: none; }
.zoomv { margin-left: 63px; flex: none; font-size: 23.500px; }

/* annotations */
.anno-box {
  position: absolute;
  box-sizing: border-box;
  width: 120px;
  background: #fff;
  border: 12px solid #54792b;
  color: #54792b;
  font-family: "Liberation Sans", sans-serif;
  font-size: 80px;
  display: flex;
  align-items: center;
  justify-content: center;
  padding: 2px 3px 0 0;
}
.b1 { left: 1225px; top: 431px; height: 165px; }
.b2 { left: 1225px; top: 1208px; height: 165px; padding-top: 5px; }
.ring {
  position: absolute;
  box-sizing: border-box;
  border: 13px solid #ff9526;
  border-radius: 50%;
}
.r1 { left: 1318px; top: 577px; width: 278px; height: 85px; }
.r2 { left: 1277px; top: 1347px; width: 428px; height: 100px; }
</style>
